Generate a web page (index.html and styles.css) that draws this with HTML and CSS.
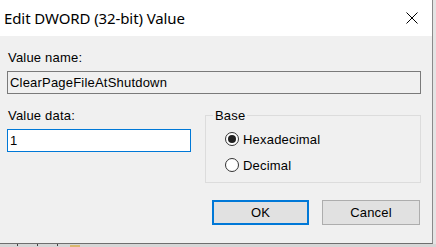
FILE: index.html
```html
<!DOCTYPE html>
<html>
<head>
<meta charset="utf-8">
<link rel="stylesheet" href="styles.css">
</head>
<body>
<div class="page">
  <div class="dialog">
    <div class="titlebar">
      <span class="title">Edit DWORD (32-bit) Value</span>
      <svg class="close" width="12" height="12" viewBox="0 0 12 12"><path d="M0.5 0.5L11.5 11.5M11.5 0.5L0.5 11.5" stroke="#000" stroke-width="1" fill="none"/></svg>
    </div>
    <div class="content">
      <div class="label">Value name:</div>
      <div class="field name">ClearPageFileAtShutdown</div>
      <div class="row">
        <div class="col">
          <div class="label">Value data:</div>
          <div class="field data">1</div>
        </div>
        <fieldset class="base">
          <legend>Base</legend>
          <div class="radio"><span class="dot on"></span><span>Hexadecimal</span></div>
          <div class="radio"><span class="dot"></span><span>Decimal</span></div>
        </fieldset>
      </div>
      <div class="buttons">
        <div class="btn ok">OK</div>
        <div class="btn">Cancel</div>
      </div>
    </div>
  </div>
  <div class="strip">
    <span class="tick t1"></span><span class="tick"></span><span class="tick"></span><span class="yellow"></span>
  </div>
</div>
</body>
</html>
```
FILE: styles.css
```css
html, body { margin: 0; padding: 0; }
body { background: #e4e4e4; font-family: "Liberation Sans", Arial, sans-serif; }
.page { width: 436px; height: 247px; overflow: hidden; background: #e4e4e4; }
.dialog {
  width: 432px; height: 243px;
  border-right: 1px solid #8a8a8a; border-bottom: 1px solid #6e6e6e;
  background: #f0f0f0; display: flex; flex-direction: column;
}
.titlebar {
  height: 36px; background: #fff; display: flex; align-items: center;
  justify-content: space-between; padding: 0 14px 0 4px; box-sizing: border-box;
}
.title { font-family: "Noto Sans", "Open Sans", sans-serif; font-size: 15px; color: #000; letter-spacing: -0.1px; margin-top: -1px; }
.close { display: block; margin-top: -1px; }
.content { padding: 14px 11px 0 7px; font-size: 13px; color: #000; letter-spacing: 0.2px; }
.label { height: 15px; line-height: 15px; padding-left: 1px; }
.field {
  box-sizing: border-box; height: 23px; line-height: 21px; padding-left: 2px;
  border: 1px solid #7a7a7a; margin-top: 6px;
}
.name { width: 414px; background: #f0f0f0; }
.row { display: flex; margin-top: 14px; gap: 14px; }
.col { width: 184px; }
.data { width: 184px; background: #fff; border-color: #0078d7; }
.base {
  margin: 0; width: 216px; height: 75px; box-sizing: border-box;
  border: 1px solid #dcdcdc; padding: 7px 0 0 19px; min-width: 0;
}
.base legend { padding: 0 2px; margin-left: -12px; line-height: 15px; height: 15px; font-size: 13px; }
.radio { display: flex; align-items: center; height: 18px; gap: 4px; margin-bottom: 8px; }
.dot {
  width: 14px; height: 14px; box-sizing: border-box; border-radius: 50%;
  border: 1px solid #333; background: #fff; display: flex; align-items: center; justify-content: center;
}
.dot.on::after { content: ""; width: 8px; height: 8px; border-radius: 50%; background: #222; }
.buttons { display: flex; justify-content: flex-end; gap: 13px; margin-top: 17px; padding-right: 1px; }
.btn {
  box-sizing: border-box; width: 98px; height: 25px; background: #e1e1e1;
  border: 1px solid #adadad; display: flex; align-items: center; justify-content: center;
}
.btn.ok { width: 97px; border: 2px solid #0078d7; }
.strip { height: 3px; background: #d6d6d6; display: flex; align-items: flex-start; position: relative; }
.tick { width: 1px; height: 2px; background: #444; margin-left: 19px; }
.tick.t1 { margin-left: 17px; }
.yellow { width: 10px; height: 3px; background: #d9b870; margin-left: 12px; margin-top: 1px; }
```
